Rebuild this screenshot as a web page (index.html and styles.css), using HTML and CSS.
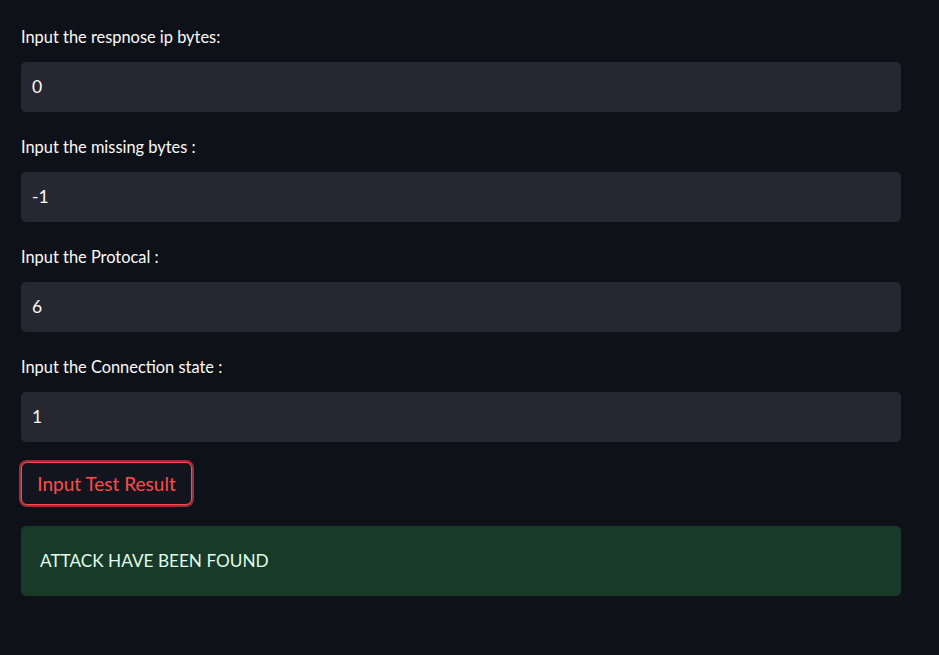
FILE: index.html
```html
<!DOCTYPE html>
<html>
<head>
<meta charset="utf-8">
<link rel="stylesheet" href="styles.css">
</head>
<body>
<main class="app">
  <div class="field">
    <label class="label">Input the respnose ip bytes:</label>
    <div class="input">0</div>
  </div>
  <div class="field">
    <label class="label">Input the missing bytes :</label>
    <div class="input">-1</div>
  </div>
  <div class="field">
    <label class="label">Input the Protocal :</label>
    <div class="input">6</div>
  </div>
  <div class="field">
    <label class="label">Input the Connection state :</label>
    <div class="input">1</div>
  </div>
  <button class="btn">Input Test Result</button>
  <div class="alert">ATTACK HAVE BEEN FOUND</div>
</main>
</body>
</html>
```
FILE: styles.css
```css
html, body {
  margin: 0;
  padding: 0;
  background: #0e1117;
  height: 100%;
}
body {
  font-family: "Lato", "Noto Sans", sans-serif;
  color: #fafafa;
}
.app {
  width: 880px;
  padding: 26px 0 0 21px;
  display: flex;
  flex-direction: column;
  align-items: flex-start;
}
.field {
  width: 100%;
  display: flex;
  flex-direction: column;
  margin-bottom: 24px;
}
.label {
  font-size: 16.4px;
  line-height: 22px;
  height: 22px;
  margin-bottom: 14px;
  color: #fafafa;
}
.input {
  height: 50px;
  box-sizing: border-box;
  background: #262730;
  border-radius: 5px;
  padding: 0 11px;
  font-size: 17.5px;
  line-height: 50px;
  color: #fafafa;
}
.btn {
  margin: -4px 0 0 0;
  box-sizing: border-box;
  width: 171px;
  height: 43px;
  background: #12151d;
  border: 1px solid #ff4b4b;
  border-radius: 6px;
  box-shadow: 0 0 0 2px #97303a;
  color: #ff4b4b;
  font-family: inherit;
  font-size: 19px;
  padding: 0;
}
.alert {
  margin-top: 21px;
  width: 100%;
  box-sizing: border-box;
  height: 70px;
  background: #1a3a29;
  border-radius: 5px;
  padding: 0 19px;
  font-size: 17.2px;
  line-height: 70px;
  color: #dffde9;
}
```
